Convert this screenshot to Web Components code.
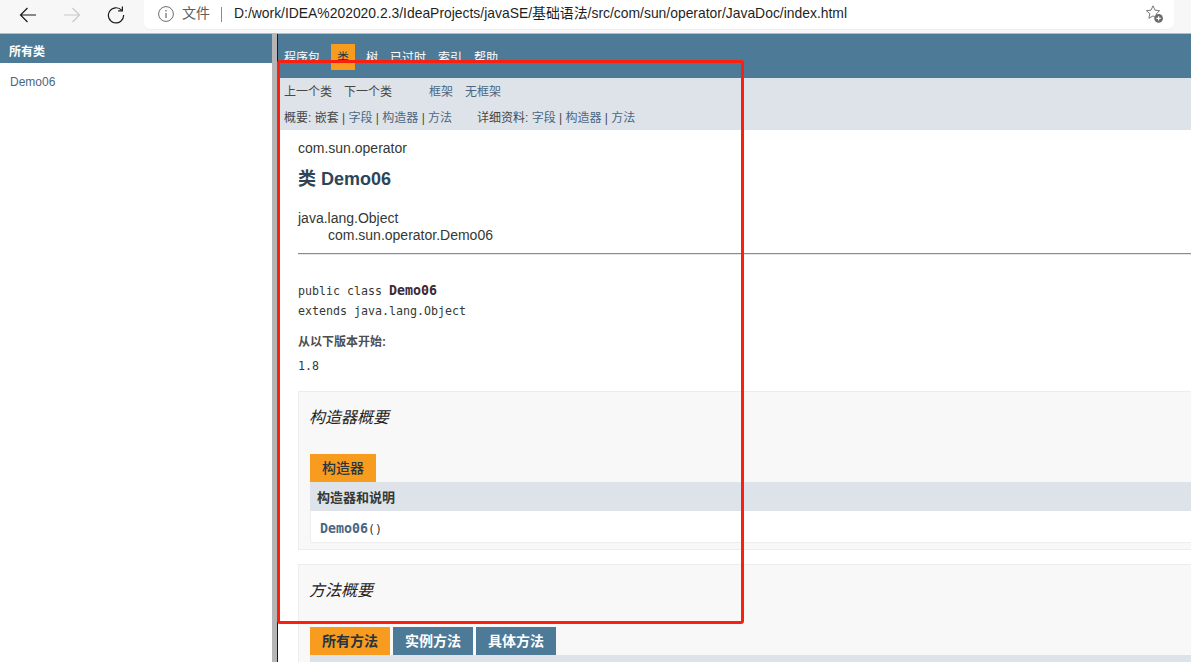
<!DOCTYPE html>
<html lang="zh">
<head>
<meta charset="utf-8">
<title>Demo06</title>
<style>
  html, body { margin: 0; height: 100%; overflow: hidden; background: #fff; }
  body { font-family: "Liberation Sans", "Noto Sans CJK SC", sans-serif; display: flex; flex-direction: column; position: relative; }
</style>
</head>
<body>
<browser-bar url="D:/work/IDEA%202020.2.3/IdeaProjects/javaSE/基础语法/src/com/sun/operator/JavaDoc/index.html"></browser-bar>
<frame-set>
  <class-frame slot="side"></class-frame>
  <doc-frame slot="main">
    <doc-nav></doc-nav>
    <doc-head></doc-head>
    <doc-signature></doc-signature>
    <doc-summary title-text="构造器概要">
      <doc-tabs tabs="构造器" header="构造器和说明">
        <div style="font-family:'DejaVu Sans Mono',monospace;font-size:11.63px;color:#353833;padding:4px 0 0 9px;line-height:27px"><b style="font-size:13.29px;color:#4a6782">Demo06</b>()</div>
      </doc-tabs>
    </doc-summary>
    <doc-summary title-text="方法概要" class="second">
      <doc-tabs tabs="所有方法,实例方法,具体方法" tab-bold></doc-tabs>
    </doc-summary>
  </doc-frame>
</frame-set>
<red-mark></red-mark>

<script>
const barTpl = document.createElement('template');
barTpl.innerHTML = `
<style>
  :host { display: flex; height: 33px; flex: none; background: #f7f7f7; border-bottom: 1px solid #b9bcbe; box-sizing: content-box; }
  .btn { width: 44px; height: 29px; display: flex; align-items: center; justify-content: center; flex: none; }
  .btns { display: flex; width: 144px; padding-left: 6px; box-sizing: border-box; }
  .field { flex: none; width: 1030px; height: 29px; background: #fff; border-radius: 0 0 6px 6px; display: flex; align-items: center; box-sizing: border-box; padding: 0 11px 0 14px; box-shadow: 0 1px 1px #eeeeee; }
  .scheme { font-size: 14px; line-height: 16px; margin-bottom: 3px; color: #5d5d5d; margin-left: 8px; }
  .sep { width: 1px; height: 15px; background: #8a8a8a; margin: 0 12px 0 11px; }
  .url { font-size: 13.9px; line-height: 16px; margin-bottom: 3px; color: #1f1f1f; white-space: nowrap; flex: 1; }
  .field svg { margin-bottom: 1px; }
</style>
<div class="btns">
  <div class="btn"><svg width="18" height="16" viewBox="0 0 18 16" fill="none" stroke="#1a1a1a" stroke-width="1.2"><path d="M17 8H1.500M8.500 1 1.500 8l7 7"/></svg></div>
  <div class="btn"><svg width="18" height="16" viewBox="0 0 18 16" fill="none" stroke="#c9c9c9" stroke-width="1.2"><path d="M1 8h15.500M9.500 1l7 7-7 7"/></svg></div>
  <div class="btn"><svg width="18" height="18" viewBox="0 0 18 18" fill="none" stroke="#1a1a1a" stroke-width="1.2"><path d="M14.600 4.200A7.600 7.600 0 1 0 16.600 9"/><path d="M15.400 0.600v4.200h-4.200"/></svg></div>
</div>
<div class="field">
  <svg width="16" height="16" viewBox="0 0 16 16" fill="none" stroke="#6b6b6b" stroke-width="1"><circle cx="8" cy="8" r="7.400"/><path d="M8 7v5" stroke-width="1.200"/><path d="M8 4v1.400" stroke-width="1.200"/></svg>
  <span class="scheme">文件</span>
  <span class="sep"></span>
  <span class="url"></span>
  <svg width="18" height="18" viewBox="0 0 18 18"><path d="M8 0.800l2 4.400 4.600.5-3.400 3.200.9 4.600L8 10.900 3.900 13.300l.9-4.600L1.400 5.700 6 5.200z" fill="none" stroke="#777" stroke-width="1"/><circle cx="13.600" cy="13.400" r="4.300" fill="#6a6a6a"/><path d="M13.600 11.200v4.400M11.400 13.400h4.400" stroke="#fff" stroke-width="1.200"/></svg>
</div>`;
class BrowserBar extends HTMLElement {
  constructor() {
    super();
    this.attachShadow({ mode: 'open' }).appendChild(barTpl.content.cloneNode(true));
    this.shadowRoot.querySelector('.url').textContent = this.getAttribute('url');
  }
}
customElements.define('browser-bar', BrowserBar);

class FrameSet extends HTMLElement {
  constructor() {
    super();
    this.attachShadow({ mode: 'open' }).innerHTML = `
<style>
  :host { display: flex; flex: 1; min-height: 0; }
  .split { width: 5px; flex: none; background: #b5b5b5; border-right: 1px solid #1a1a1a; }
  ::slotted([slot=side]) { width: 272px; flex: none; }
  ::slotted([slot=main]) { flex: 1; min-width: 0; }
</style>
<slot name="side"></slot><div class="split"></div><slot name="main"></slot>`;
  }
}
customElements.define('frame-set', FrameSet);

class ClassFrame extends HTMLElement {
  constructor() {
    super();
    this.attachShadow({ mode: 'open' }).innerHTML = `
<style>
  :host { display: block; background: #fff; }
  h1 { margin: 0; height: 29px; line-height: 36px; background: #4d7a97; color: #fff; font-size: 12px; font-weight: bold; padding-left: 9px; }
  a { display: block; margin: 11px 0 0 10px; font-size: 12px; line-height: 16px; color: #4a6782; }
</style>
<h1>所有类</h1>
<a>Demo06</a>`;
  }
}
customElements.define('class-frame', ClassFrame);

class DocFrame extends HTMLElement {
  constructor() {
    super();
    this.attachShadow({ mode: 'open' }).innerHTML = `
<style>
  :host { display: block; overflow: hidden; background: #fff; color: #353833; }
</style>
<slot></slot>`;
  }
}
customElements.define('doc-frame', DocFrame);

class DocNav extends HTMLElement {
  constructor() {
    super();
    this.attachShadow({ mode: 'open' }).innerHTML = `
<style>
  :host { display: block; font-size: 12px; }
  .top { height: 44px; background: #4d7a97; color: #fff; display: flex; padding: 10px 0 0 6px; box-sizing: border-box; gap: 12px; }
  .top span { line-height: 29px; }
  .top .on { background: #f89c1f; color: #253441; padding: 0 6px; margin: 0 -1px; height: 26px; }
  .sub { height: 52px; background: #dee3e9; box-sizing: border-box; padding: 5px 0 0 6px; }
  .row { display: flex; height: 18px; line-height: 18px; color: #474747; }
  .row + .row { margin-top: 8px; }
  a { color: #4a6782; }
  .prev { width: 60px; }
  .next { width: 85px; }
  .fr { width: 36px; }
  .sum { width: 193px; }
</style>
<div class="top"><span>程序包</span><span class="on">类</span><span>树</span><span>已过时</span><span>索引</span><span>帮助</span></div>
<div class="sub">
  <div class="row"><span class="prev">上一个类</span><span class="next">下一个类</span><a class="fr">框架</a><a>无框架</a></div>
  <div class="row"><span class="sum">概要: 嵌套 | <a>字段</a> | <a>构造器</a> | <a>方法</a></span><span>详细资料: <a>字段</a> | <a>构造器</a> | <a>方法</a></span></div>
</div>`;
  }
}
customElements.define('doc-nav', DocNav);

class DocHead extends HTMLElement {
  constructor() {
    super();
    this.attachShadow({ mode: 'open' }).innerHTML = `
<style>
  :host { display: block; padding: 10px 0 0 20px; color: #353833; }
  .pkg { font-size: 14px; line-height: 16px; }
  h2 { margin: 11px 0 0; font-size: 18px; line-height: 24px; color: #2c4557; }
  ul { list-style: none; margin: 19px 0 0; padding: 0; font-size: 14px; line-height: 17px; }
  ul ul { margin: 0; padding-left: 30px; }
  hr { border: 0; border-top: 1px solid #8c8c8c; border-bottom: 1px solid #e6e6e6; margin: 9px 0 0; }
</style>
<div class="pkg">com.sun.operator</div>
<h2>类 Demo06</h2>
<ul><li>java.lang.Object<ul><li>com.sun.operator.Demo06</li></ul></li></ul>
<hr>`;
  }
}
customElements.define('doc-head', DocHead);

class DocSignature extends HTMLElement {
  constructor() {
    super();
    this.attachShadow({ mode: 'open' }).innerHTML = `
<style>
  :host { display: block; padding: 26px 0 0 20px; color: #353833; font-family: "DejaVu Sans Mono", monospace; font-size: 11.63px; }
  pre { margin: 0; font: inherit; line-height: 20px; }
  b { font-size: 13.29px; color: #3a2a3a; }
  .label { font-family: "Liberation Sans", "Noto Sans CJK SC", sans-serif; font-weight: bold; font-size: 12px; color: #4e4e4e; line-height: 16px; margin-top: 13px; }
  .ver { line-height: 16px; margin-top: 8px; }
</style>
<pre>public class <b>Demo06</b>
extends java.lang.Object</pre>
<div class="label">从以下版本开始:</div>
<div class="ver">1.8</div>`;
  }
}
customElements.define('doc-signature', DocSignature);

class DocSummary extends HTMLElement {
  constructor() {
    super();
    this.attachShadow({ mode: 'open' }).innerHTML = `
<style>
  :host { display: block; margin: 17px -20px 0 20px; background: #f8f8f8; border: 1px solid #ededed; padding: 0 0 6px 11px; }
  :host(.second) { margin-top: 14px; }
  h3 { margin: 0 0 0 -1px; font-size: 16px; font-style: italic; font-weight: normal; line-height: 22px; padding-top: 15px; height: 62px; box-sizing: border-box; color: #222; }
</style>
<h3></h3>
<slot></slot>`;
    this.shadowRoot.querySelector('h3').textContent = this.getAttribute('title-text');
  }
}
customElements.define('doc-summary', DocSummary);

class DocTabs extends HTMLElement {
  constructor() {
    super();
    const bold = this.hasAttribute('tab-bold');
    const tabs = this.getAttribute('tabs').split(',').map((t, i) =>
      `<span class="tab ${i == 0 ? 'on' : ''}">${t}</span>`).join('');
    const head = this.getAttribute('header');
    this.attachShadow({ mode: 'open' }).innerHTML = `
<style>
  :host { display: block; }
  .tabs { display: flex; gap: 3px; }
  .tab { height: 28px; line-height: 28px; padding: 0 12px; font-size: 14px; font-weight: ${bold ? 'bold' : '500'}; background: #4d7a97; color: #fff; }
  .tab.on { background: #f89c1f; color: #253441; }
  .head { background: #dee3e9; height: 29px; line-height: 32px; padding-left: 7px; font-size: 13px; font-weight: bold; color: #353833; min-height: 29px; }
  .body { background: #fff; border: 1px solid #eeeeee; border-top: 0; height: 31px; box-sizing: content-box; }
</style>
<div class="tabs">${tabs}</div>
<div class="head">${head || ''}</div>
${head ? '<div class="body"><slot></slot></div>' : ''}`;
  }
}
customElements.define('doc-tabs', DocTabs);

class RedMark extends HTMLElement {
  constructor() {
    super();
    this.attachShadow({ mode: 'open' }).innerHTML = `
<style>
  :host { position: absolute; left: 277px; top: 60px; width: 467px; height: 564px; box-sizing: border-box; border: 3px solid #fb1f10; border-radius: 3px; pointer-events: none; }
</style>`;
  }
}
customElements.define('red-mark', RedMark);
</script>
</body>
</html>
